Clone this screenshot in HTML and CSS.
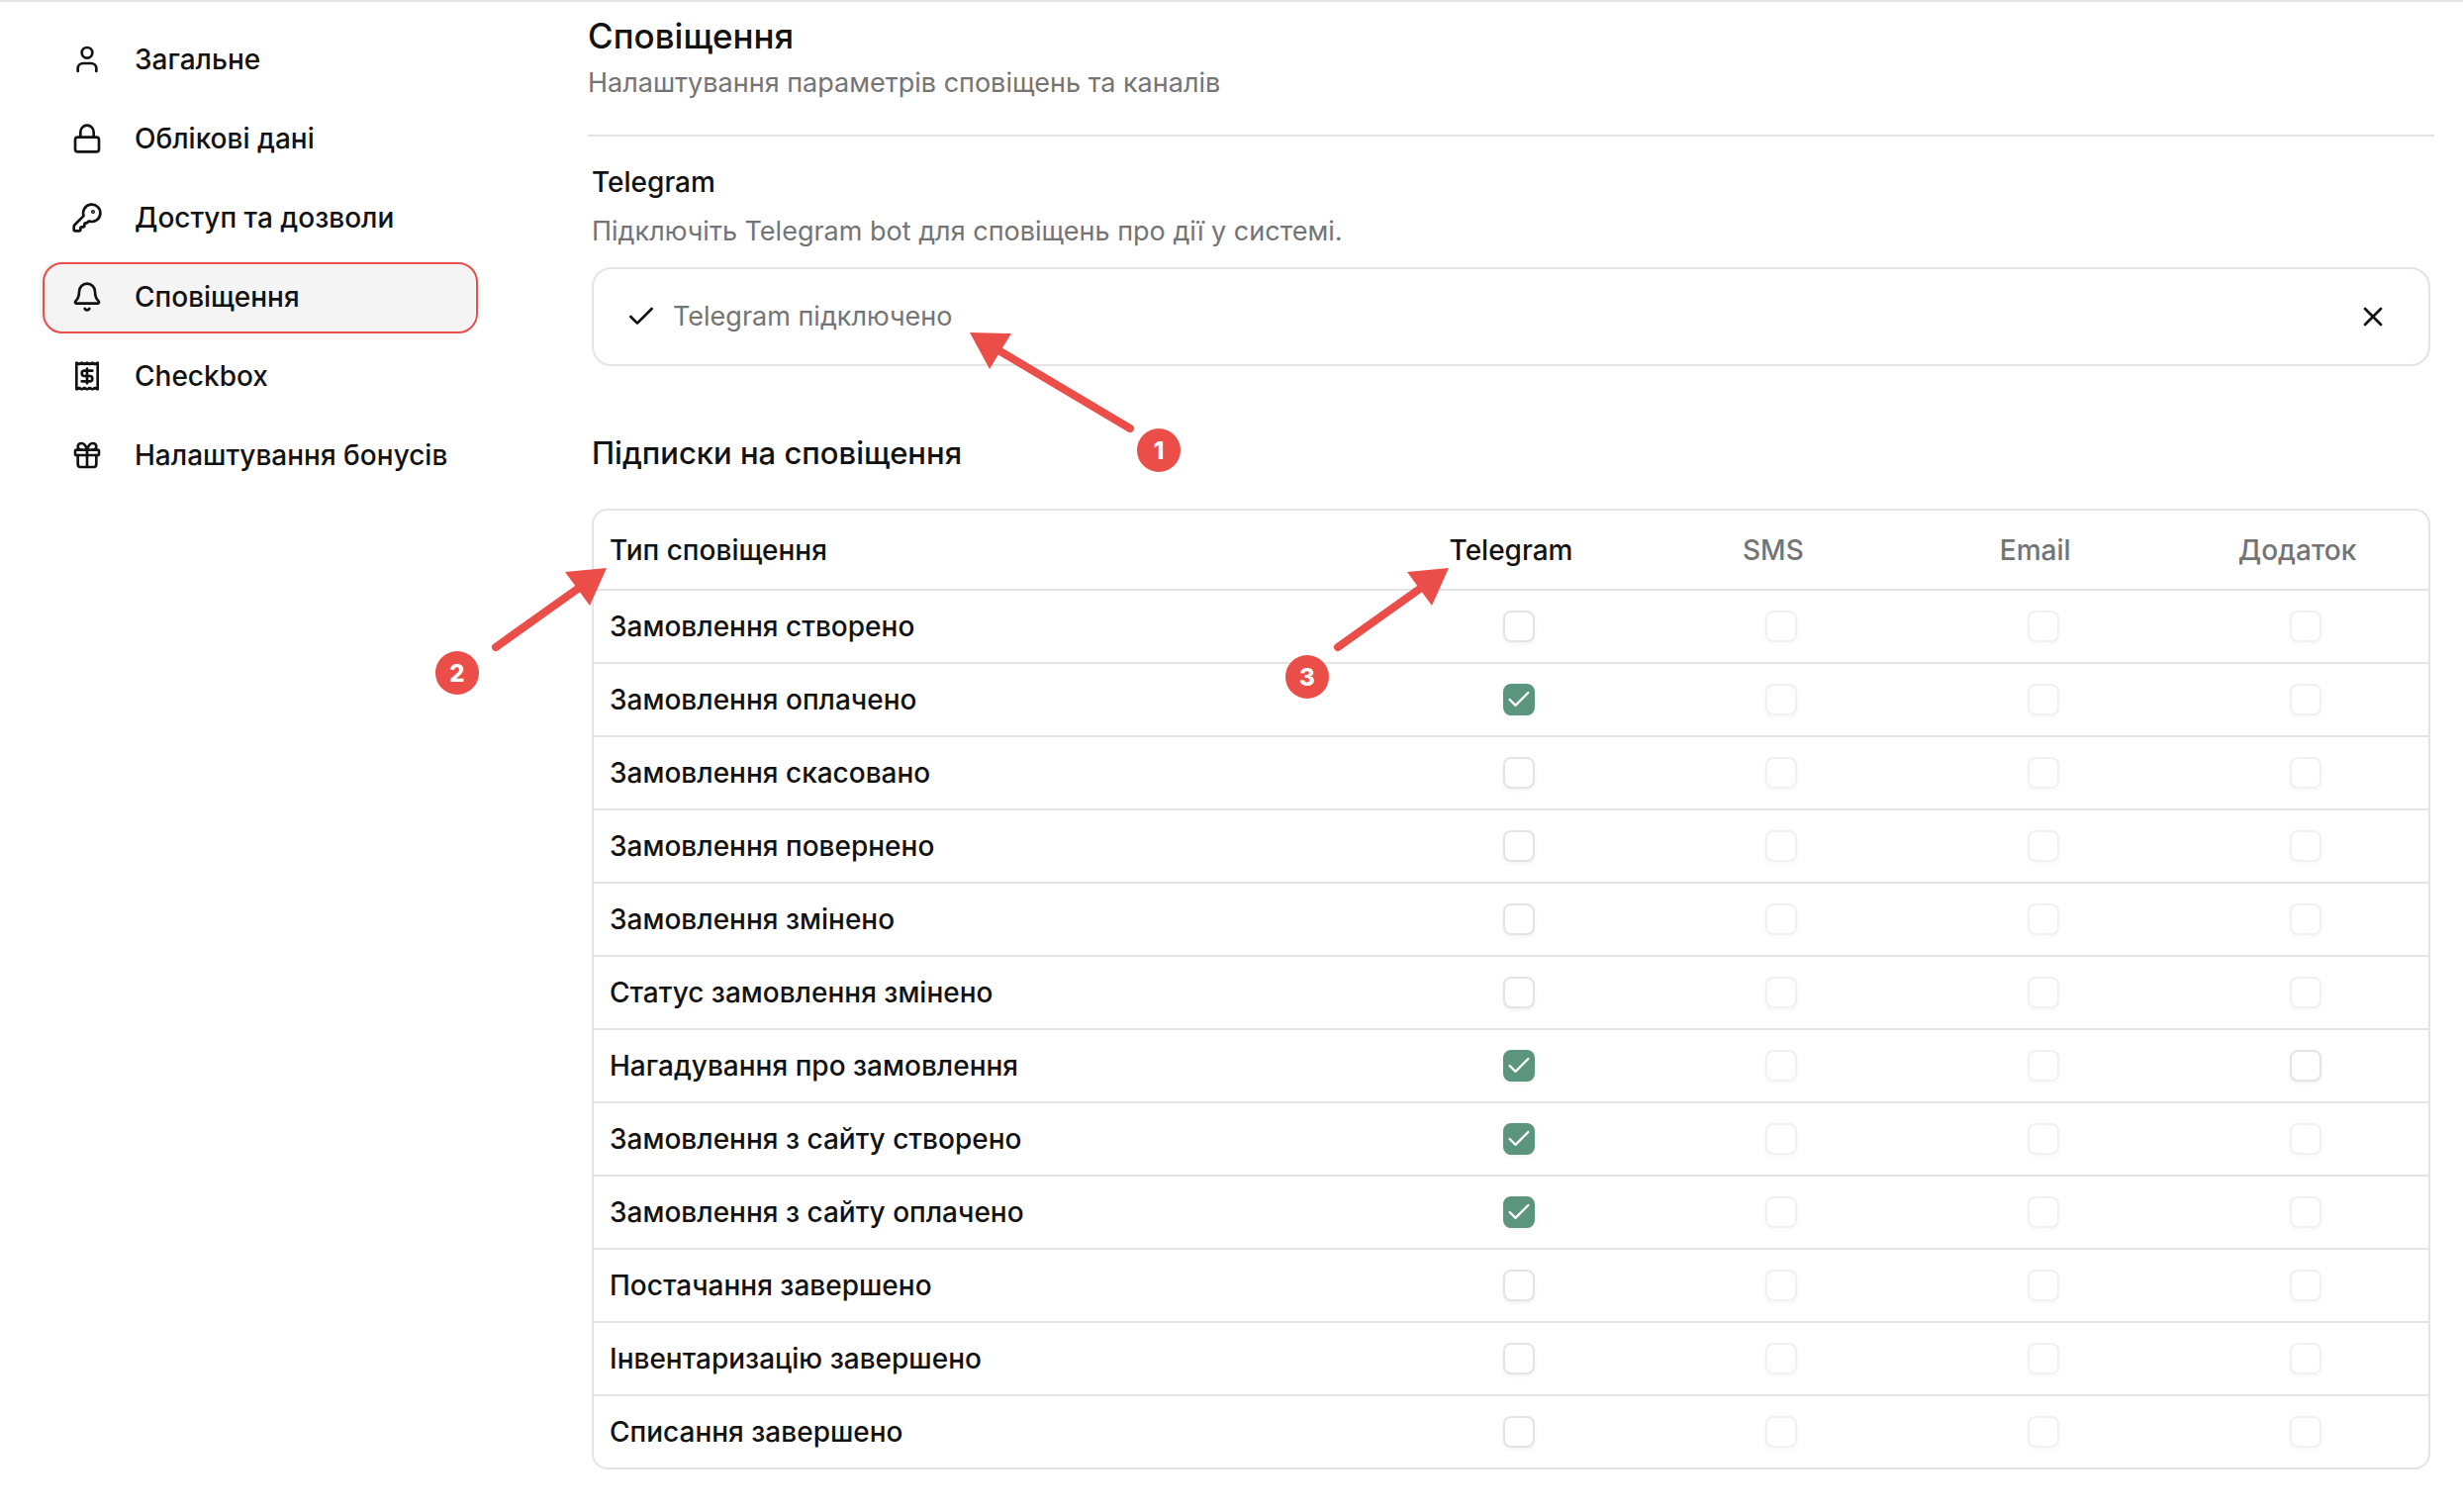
FILE: index.html
```html
<!DOCTYPE html>
<html lang="uk">
<head>
<meta charset="utf-8">
<meta name="viewport" content="width=device-width, initial-scale=1">
<title>Сповіщення</title>
<link rel="stylesheet" href="styles.css">
</head>
<body>
<div class="page">
  <nav class="sidebar" aria-label="Налаштування">
    <a class="nav-item" href="#general">
      <svg class="icon" viewBox="0 0 24 24" aria-hidden="true"><path d="M19 21v-2a4 4 0 0 0-4-4H9a4 4 0 0 0-4 4v2"/><circle cx="12" cy="7" r="4"/></svg>
      Загальне
    </a>
    <a class="nav-item" href="#account">
      <svg class="icon" viewBox="0 0 24 24" aria-hidden="true"><rect x="3" y="11" width="18" height="11" rx="2"/><path d="M7 11V7a5 5 0 0 1 10 0v4"/></svg>
      Облікові дані
    </a>
    <a class="nav-item" href="#access">
      <svg class="icon" viewBox="0 0 24 24" aria-hidden="true"><path d="M2.586 17.414A2 2 0 0 0 2 18.828V21a1 1 0 0 0 1 1h3a1 1 0 0 0 1-1v-1a1 1 0 0 1 1-1h1a1 1 0 0 0 1-1v-1a1 1 0 0 1 1-1h.172a2 2 0 0 0 1.414-.586l.814-.814a6.5 6.5 0 1 0-4-4z"/><circle cx="16.5" cy="7.5" r=".5" fill="currentColor"/></svg>
      Доступ та дозволи
    </a>
    <a class="nav-item nav-item-active" href="#notifications" aria-current="page">
      <svg class="icon" viewBox="0 0 24 24" aria-hidden="true"><path d="M10.268 21a2 2 0 0 0 3.464 0"/><path d="M3.262 15.326A1 1 0 0 0 4 17h16a1 1 0 0 0 .74-1.673C19.41 13.956 18 12.499 18 8A6 6 0 0 0 6 8c0 4.499-1.411 5.956-2.738 7.326"/></svg>
      Сповіщення
    </a>
    <a class="nav-item" href="#checkbox">
      <svg class="icon" viewBox="0 0 24 24" aria-hidden="true"><path d="M4 2v20l2-1 2 1 2-1 2 1 2-1 2 1 2-1 2 1V2l-2 1-2-1-2 1-2-1-2 1-2-1-2 1Z"/><path d="M16 8h-6a2 2 0 1 0 0 4h4a2 2 0 1 1 0 4H8"/><path d="M12 17.5v-11"/></svg>
      Checkbox
    </a>
    <a class="nav-item" href="#bonuses">
      <svg class="icon" viewBox="0 0 24 24" aria-hidden="true"><rect x="3" y="8" width="18" height="4" rx="1"/><path d="M12 8v13"/><path d="M19 12v7a2 2 0 0 1-2 2H7a2 2 0 0 1-2-2v-7"/><path d="M7.5 8a2.5 2.5 0 0 1 0-5A4.8 8 0 0 1 12 8a4.8 8 0 0 1 4.5-5 2.5 2.5 0 0 1 0 5"/></svg>
      Налаштування бонусів
    </a>
  </nav>

  <main class="content">
    <header class="content-header">
      <h1 class="title">Сповіщення</h1>
      <p class="muted">Налаштування параметрів сповіщень та каналів</p>
    </header>

    <section class="section">
      <h2 class="section-label">Telegram</h2>
      <p class="muted">Підключіть Telegram bot для сповіщень про дії у системі.</p>
      <div class="status-card">
        <svg class="icon" viewBox="0 0 24 24" aria-hidden="true"><path d="M20 6 9 17l-5-5"/></svg>
        <span class="muted">Telegram підключено</span>
        <button class="close-button" type="button" aria-label="Відключити Telegram">
          <svg class="icon" viewBox="0 0 24 24" aria-hidden="true"><path d="M18 6 6 18"/><path d="m6 6 12 12"/></svg>
        </button>
      </div>
    </section>

    <section class="section subscriptions">
      <h2 class="section-title">Підписки на сповіщення</h2>
      <div class="table-frame">
        <table class="table">
          <thead>
            <tr><th class="col-type" scope="col">Тип сповіщення</th><th scope="col" id="tg">Telegram</th><th class="col-off" scope="col" id="sms">SMS</th><th class="col-off" scope="col" id="mail">Email</th><th class="col-off" scope="col" id="app">Додаток</th></tr>
          </thead>
          <tbody>
            <tr><th scope="row" id="r1">Замовлення створено</th><td><input type="checkbox" aria-labelledby="r1 tg"></td><td><input type="checkbox" aria-labelledby="r1 sms" disabled></td><td><input type="checkbox" aria-labelledby="r1 mail" disabled></td><td><input type="checkbox" aria-labelledby="r1 app" disabled></td></tr>
            <tr><th scope="row" id="r2">Замовлення оплачено</th><td><input type="checkbox" aria-labelledby="r2 tg" checked></td><td><input type="checkbox" aria-labelledby="r2 sms" disabled></td><td><input type="checkbox" aria-labelledby="r2 mail" disabled></td><td><input type="checkbox" aria-labelledby="r2 app" disabled></td></tr>
            <tr><th scope="row" id="r3">Замовлення скасовано</th><td><input type="checkbox" aria-labelledby="r3 tg"></td><td><input type="checkbox" aria-labelledby="r3 sms" disabled></td><td><input type="checkbox" aria-labelledby="r3 mail" disabled></td><td><input type="checkbox" aria-labelledby="r3 app" disabled></td></tr>
            <tr><th scope="row" id="r4">Замовлення повернено</th><td><input type="checkbox" aria-labelledby="r4 tg"></td><td><input type="checkbox" aria-labelledby="r4 sms" disabled></td><td><input type="checkbox" aria-labelledby="r4 mail" disabled></td><td><input type="checkbox" aria-labelledby="r4 app" disabled></td></tr>
            <tr><th scope="row" id="r5">Замовлення змінено</th><td><input type="checkbox" aria-labelledby="r5 tg"></td><td><input type="checkbox" aria-labelledby="r5 sms" disabled></td><td><input type="checkbox" aria-labelledby="r5 mail" disabled></td><td><input type="checkbox" aria-labelledby="r5 app" disabled></td></tr>
            <tr><th scope="row" id="r6">Статус замовлення змінено</th><td><input type="checkbox" aria-labelledby="r6 tg"></td><td><input type="checkbox" aria-labelledby="r6 sms" disabled></td><td><input type="checkbox" aria-labelledby="r6 mail" disabled></td><td><input type="checkbox" aria-labelledby="r6 app" disabled></td></tr>
            <tr><th scope="row" id="r7">Нагадування про замовлення</th><td><input type="checkbox" aria-labelledby="r7 tg" checked></td><td><input type="checkbox" aria-labelledby="r7 sms" disabled></td><td><input type="checkbox" aria-labelledby="r7 mail" disabled></td><td><input type="checkbox" aria-labelledby="r7 app"></td></tr>
            <tr><th scope="row" id="r8">Замовлення з сайту створено</th><td><input type="checkbox" aria-labelledby="r8 tg" checked></td><td><input type="checkbox" aria-labelledby="r8 sms" disabled></td><td><input type="checkbox" aria-labelledby="r8 mail" disabled></td><td><input type="checkbox" aria-labelledby="r8 app" disabled></td></tr>
            <tr><th scope="row" id="r9">Замовлення з сайту оплачено</th><td><input type="checkbox" aria-labelledby="r9 tg" checked></td><td><input type="checkbox" aria-labelledby="r9 sms" disabled></td><td><input type="checkbox" aria-labelledby="r9 mail" disabled></td><td><input type="checkbox" aria-labelledby="r9 app" disabled></td></tr>
            <tr><th scope="row" id="r10">Постачання завершено</th><td><input type="checkbox" aria-labelledby="r10 tg"></td><td><input type="checkbox" aria-labelledby="r10 sms" disabled></td><td><input type="checkbox" aria-labelledby="r10 mail" disabled></td><td><input type="checkbox" aria-labelledby="r10 app" disabled></td></tr>
            <tr><th scope="row" id="r11">Інвентаризацію завершено</th><td><input type="checkbox" aria-labelledby="r11 tg"></td><td><input type="checkbox" aria-labelledby="r11 sms" disabled></td><td><input type="checkbox" aria-labelledby="r11 mail" disabled></td><td><input type="checkbox" aria-labelledby="r11 app" disabled></td></tr>
            <tr><th scope="row" id="r12">Списання завершено</th><td><input type="checkbox" aria-labelledby="r12 tg"></td><td><input type="checkbox" aria-labelledby="r12 sms" disabled></td><td><input type="checkbox" aria-labelledby="r12 mail" disabled></td><td><input type="checkbox" aria-labelledby="r12 app" disabled></td></tr>
          </tbody>
        </table>
      </div>
    </section>
  </main>

  <!-- Callouts drawn over the page -->
  <svg class="callouts" width="1500" height="720" viewBox="0 0 1500 720">
    <rect class="callout-frame" x="44" y="266" width="438" height="70" rx="19"/>
    <path class="callout-line" d="M1142 433 1009 354M501 654 588 592M1352 654 1439 592"/>
    <path class="callout-fill" d="M980 336 1022 337 1000 373ZM613 574 571 578 596 612ZM1464 574 1422 578 1447 612Z"/>
    <circle class="callout-fill" cx="1171" cy="455" r="22"/>
    <circle class="callout-fill" cx="462" cy="680" r="22"/>
    <circle class="callout-fill" cx="1321" cy="684" r="22"/>
    <text class="callout-number" x="1171" y="464">1</text>
    <text class="callout-number" x="462" y="689">2</text>
    <text class="callout-number" x="1321" y="693">3</text>
  </svg>
</div>
</body>
</html>
```
FILE: styles.css
```css
:root {
  --text: #121212;
  --muted: #747474;
  --border: #e4e4e4;
  --accent: #5b957e;
  --callout: #eb4e49;
}

* {
  box-sizing: border-box;
}

body {
  margin: 0;
  background: #fff;
  color: var(--text);
  font: 400 28px/40px Inter, "Noto Sans", sans-serif;
}

h1,
h2,
p {
  margin: 0;
}

.page {
  position: relative;
  display: flex;
  gap: 114px;
  padding: 0 29px 40px 40px;
  border-top: 2px solid var(--border);
}

.sidebar {
  flex: 0 0 440px;
  display: flex;
  flex-direction: column;
  gap: 8px;
  padding-top: 22px;
}

.nav-item {
  display: flex;
  align-items: center;
  gap: 32px;
  padding: 16px 16px 16px 32px;
  border-radius: 20px;
  color: inherit;
  font-weight: 500;
  text-decoration: none;
  white-space: nowrap;
}

.nav-item-active {
  background: #f4f4f4;
}

.icon {
  flex: none;
  width: 32px;
  height: 32px;
  fill: none;
  stroke: currentColor;
  stroke-width: 2;
  stroke-linecap: round;
  stroke-linejoin: round;
}

.content {
  flex: 1;
  min-width: 0;
  padding-top: 14px;
}

.content-header {
  display: flex;
  flex-direction: column;
  gap: 8px;
  padding-bottom: 32px;
  border-bottom: 2px solid var(--border);
}

.title {
  font-size: 35px;
  font-weight: 500;
}

.muted {
  color: var(--muted);
  font-size: 27px;
}

.section {
  padding: 26px 4px 0;
}

.section-label {
  margin-bottom: 10px;
  font-size: 28px;
  font-weight: 500;
}

.status-card {
  display: flex;
  align-items: center;
  gap: 16px;
  margin-top: 16px;
  padding: 24px 32px;
  border: 2px solid var(--border);
  border-radius: 20px;
}

.close-button {
  display: grid;
  place-items: center;
  width: 48px;
  height: 48px;
  margin-left: auto;
  padding: 0;
  border: 0;
  background: none;
  color: inherit;
}

.subscriptions {
  padding-top: 64px;
}

.section-title {
  margin-bottom: 32px;
  font-size: 31px;
  font-weight: 500;
  line-height: 48px;
}

.table-frame {
  overflow: hidden;
  border: 2px solid var(--border);
  border-radius: 16px;
}

.table {
  width: 100%;
  border-collapse: separate;
  border-spacing: 0;
  table-layout: fixed;
}

.table th,
.table td {
  height: 74px;
  padding: 0;
  border-bottom: 2px solid var(--border);
  font-weight: 500;
  text-align: center;
  vertical-align: middle;
}

.table thead th {
  height: 81px;
}

.table .col-type,
.table tbody th {
  padding-left: 16px;
  text-align: left;
}

.col-type {
  width: 42.857%;
}

.table .col-off {
  color: var(--muted);
}

.table td {
  padding-left: 16px;
}

.table tbody tr:last-child > * {
  height: 72px;
  border-bottom: 0;
}

input[type="checkbox"] {
  appearance: none;
  display: block;
  width: 32px;
  height: 32px;
  margin: 0 auto;
  border: 2px solid var(--border);
  border-radius: 8px;
  background: #fff;
  box-shadow: 0 2px 4px rgb(0 0 0 / 5%);
}

input[type="checkbox"]:checked {
  border-color: var(--accent);
  background: var(--accent) url("data:image/svg+xml,%3Csvg xmlns='http://www.w3.org/2000/svg' viewBox='0 0 24 24' fill='none' stroke='white' stroke-width='2' stroke-linecap='round' stroke-linejoin='round'%3E%3Cpath d='M20 6 9 17l-5-5'/%3E%3C/svg%3E") center / 28px 28px no-repeat;
}

input[type="checkbox"]:disabled {
  opacity: 0.5;
}

.callouts {
  position: absolute;
  top: -2px;
  left: 0;
  pointer-events: none;
}

.callout-frame {
  fill: none;
  stroke: var(--callout);
  stroke-width: 2;
}

.callout-line {
  fill: none;
  stroke: var(--callout);
  stroke-width: 8;
  stroke-linecap: round;
}

.callout-fill {
  fill: var(--callout);
}

.callout-number {
  fill: #fff;
  font-size: 24px;
  font-weight: 800;
  text-anchor: middle;
}
```
